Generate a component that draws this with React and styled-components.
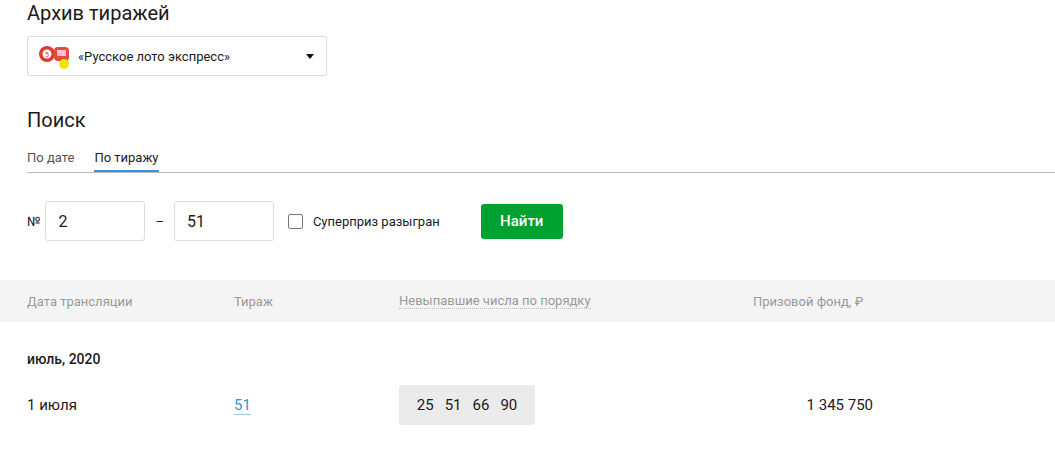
import React from "react";
import styled, { createGlobalStyle } from "styled-components";

const G = createGlobalStyle`
  body { margin: 0; font-family: Roboto, "Liberation Sans", sans-serif; color: #1a1a1a; background: #fff; }
`;
const Page = styled.div`padding: 0 0 0 27px;`;
const H = styled.h2`margin: 0; font-size: 20px; font-weight: 400; line-height: 24px; padding-top: ${p => p.$top}px;`;
const Select = styled.div`
  margin-top: 11px; width: 300px; height: 40px; box-sizing: border-box; border: 1px solid #ddd; border-radius: 2px;
  display: flex; align-items: center; padding: 0 12px 0 10px; font-size: 13px; gap: 6px;
`;
const Caret = styled.span`margin-left: auto; width: 0; height: 0; border-left: 4px solid transparent; border-right: 4px solid transparent; border-top: 5px solid #111;`;
const Tabs = styled.div`display: flex; gap: 20px; margin-top: 12px; border-bottom: 1px solid #bbb; height: 28px;`;
const Tab = styled.div`font-size: 13px; color: ${p => p.$active ? "#222" : "#555"}; padding-top: 6px; height: 28px; box-sizing: border-box;
  ${p => p.$active && "border-bottom: 2px solid #3c8fd8; margin-bottom: -1px;"}`;
const Form = styled.div`display: flex; align-items: center; margin-top: 27px; height: 42px; font-size: 13px;`;
const Input = styled.div`width: 100px; height: 40px; box-sizing: border-box; border: 1px solid #ddd; border-radius: 3px; padding: 0 12px;
  display: flex; align-items: center; font-size: 16px;`;
const Box = styled.span`width: 13px; height: 13px; border: 1px solid #777; border-radius: 2px; margin: 0 10px 0 14px;`;
const Btn = styled.div`margin-left: 41px; width: 82px; height: 35px; background: #00a031; color: #fff; border-radius: 3px; display: flex;
  align-items: center; justify-content: center; font-size: 15px; font-weight: 500;`;
const Row = styled.div`display: grid; grid-template-columns: 207px 165px 354px 120px; align-items: center; margin-left: -27px; padding-left: 27px;
  height: ${p => p.$h}px; background: ${p => p.$bg || "transparent"}; margin-top: ${p => p.$mt || 0}px; font-size: ${p => p.$fs || 15}px;
  color: ${p => p.$c || "#1a1a1a"};`;
const Dotted = styled.span`border-bottom: 1px dotted #bbb; justify-self: start;`;
const Month = styled.div`font-size: 14px; font-weight: 500; margin-top: 29px;`;
const Link = styled.span`color: #3c8fd8; border-bottom: 1px solid #9cc7ee; justify-self: start;`;
const Nums = styled.div`background: #ebebeb; border-radius: 3px; height: 40px; width: 136px; display: flex; align-items: center; justify-content: center; gap: 11px; font-size: 15px; justify-self: start;`;
const Right = styled.span`text-align: right;`;

const Logo = () => (
  <svg width="34" height="26" viewBox="0 0 34 26">
    <circle cx="9" cy="11" r="8" fill="#e03a35" />
    <circle cx="9" cy="11" r="4.5" fill="#fff" />
    <text x="9" y="14" fontSize="7" textAnchor="middle" fill="#e03a35" fontFamily="Roboto">5</text>
    <rect x="16" y="4" width="15" height="14" rx="4" fill="#e64a3b" />
    <rect x="19" y="7" width="9" height="6" fill="#fbd" />
    <circle cx="26" cy="21" r="5" fill="#f2e600" />
  </svg>
);

export default function App() {
  return (
    <Page>
      <G />
      <H $top={1}>Архив тиражей</H>
      <Select><Logo />«Русское лото экспресс»<Caret /></Select>
      <H $top={32}>Поиск</H>
      <Tabs><Tab>По дате</Tab><Tab $active>По тиражу</Tab></Tabs>
      <Form>
        <span style={{ marginRight: 5 }}>№</span>
        <Input>2</Input>
        <span style={{ margin: "0 10px" }}>–</span>
        <Input>51</Input>
        <Box />Суперприз разыгран
        <Btn>Найти</Btn>
      </Form>
      <Row $h={42} $bg="#f4f4f4" $mt={38} $fs={13} $c="#9a9a9a">
        <span>Дата трансляции</span><span>Тираж</span><Dotted>Невыпавшие числа по порядку</Dotted><span>Призовой фонд, ₽</span>
      </Row>
      <Month>июль, 2020</Month>
      <Row $h={40} $mt={18}>
        <span>1 июля</span><Link>51</Link>
        <Nums><span>25</span><span>51</span><span>66</span><span>90</span></Nums>
        <Right>1 345 750</Right>
      </Row>
    </Page>
  );
}
